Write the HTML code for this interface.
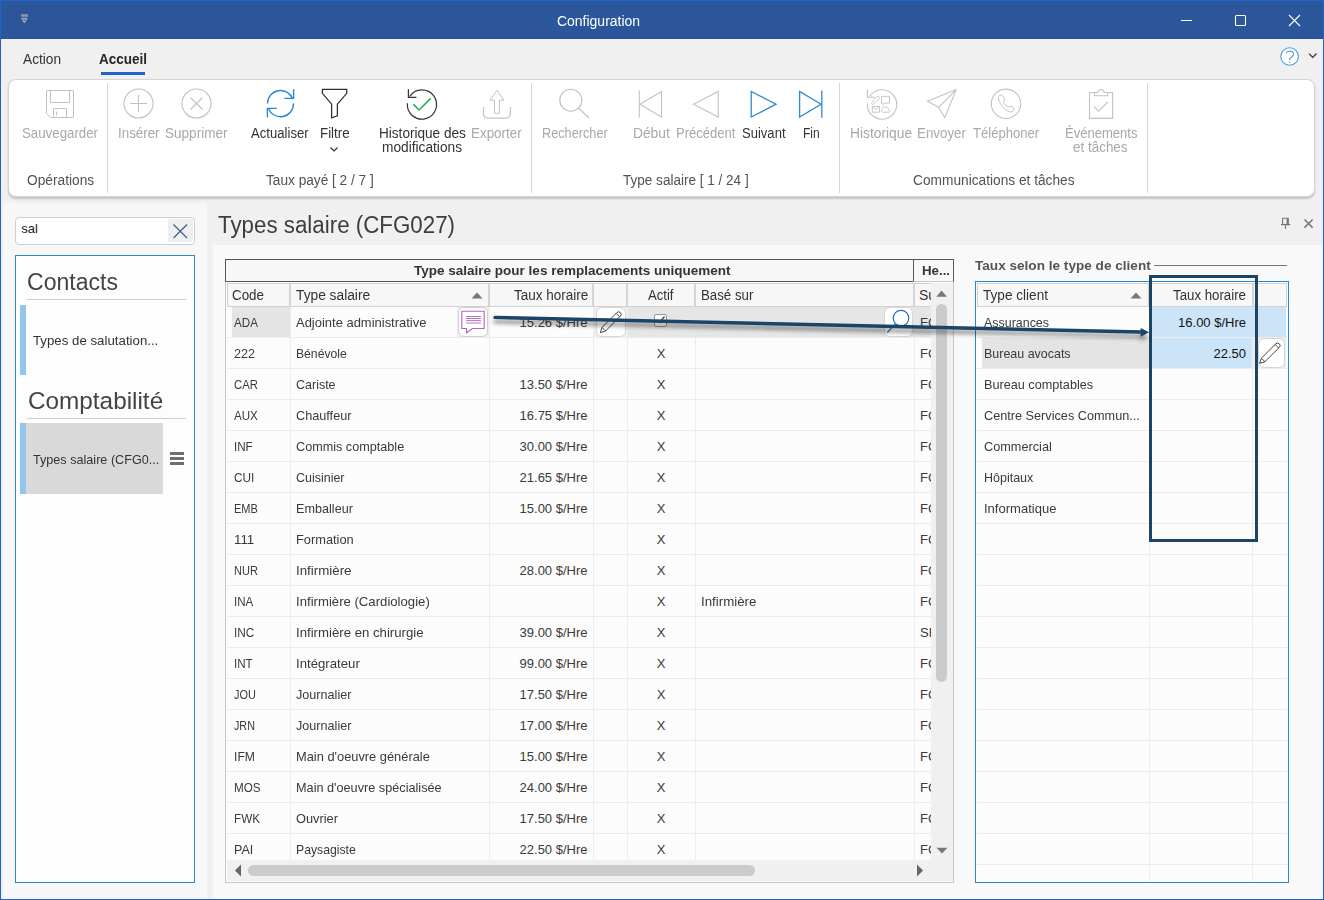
<!DOCTYPE html><html><head><meta charset="utf-8"><style>
html,body{margin:0;padding:0;}
body{width:1324px;height:900px;position:relative;overflow:hidden;background:#f0f0f0;font-family:"Liberation Sans", sans-serif;}
.t{position:absolute;white-space:nowrap;line-height:1;}
svg{overflow:visible}
</style></head><body>
<div style="position:absolute;left:0px;top:0px;width:1324px;height:39px;background:#2b579a"></div>
<div style="position:absolute;left:0px;top:0px;width:1324px;height:1px;background:#1f66d1"></div>
<svg style="position:absolute;left:18px;top:10px;" width="14" height="16" viewBox="18 10 14 16" fill="none"><rect x="21.1" y="14.2" width="6.8" height="2.6" fill="#8f97a6"/><path d="M21.6 18.3 L27.2 18.3 L24.4 23 Z" fill="#7f858f" stroke="#b8bcc4" stroke-width="0.8"/></svg>
<div class="t" style="left:557.40px;top:14px;font-size:14px;height:14px;color:#ffffff;font-weight:400;transform:scaleX(0.9976);transform-origin:0 0;">Configuration</div>
<svg style="position:absolute;left:1175px;top:10px;" width="140" height="24" viewBox="1175 10 140 24" fill="none"><path d="M1181 20.5 H1192" stroke="#fff" stroke-width="1"/><rect x="1235.5" y="15.5" width="10" height="10" rx="1" stroke="#fff" stroke-width="1.1"/><path d="M1289 15 L1300 26 M1300 15 L1289 26" stroke="#fff" stroke-width="1.1"/></svg>
<div class="t" style="left:23.40px;top:52px;font-size:14px;height:14px;color:#333;font-weight:400;transform:scaleX(0.9789);transform-origin:0 0;">Action</div>
<div class="t" style="left:99.00px;top:52px;font-size:14px;height:14px;color:#262626;font-weight:700;transform:scaleX(0.9644);transform-origin:0 0;">Accueil</div>
<div style="position:absolute;left:101px;top:72px;width:44px;height:3px;background:#1e63c8"></div>
<svg style="position:absolute;left:1278px;top:44px;" width="45" height="24" viewBox="1278 44 45 24" fill="none"><circle cx="1289.6" cy="56.5" r="8.8" fill="#fff" stroke="#4a9ed8" stroke-width="1.1"/><path d="M1286.4 52.8 C1287.5 51 1290.5 50.6 1292.4 51.8 C1294.3 53.2 1293.8 55.6 1291.8 56.7 C1290.2 57.6 1289.6 58.3 1289.6 59.8" stroke="#4a9ed8" stroke-width="1.1" stroke-linecap="round"/><circle cx="1289.6" cy="62.2" r="0.7" fill="#4a9ed8"/><path d="M1309 53.7 L1312.8 57.3 L1316.6 53.5" stroke="#444" stroke-width="1.3"/></svg>
<div style="position:absolute;left:8px;top:79px;width:1307px;height:118px;background:#fff;border:1px solid #d4d4d4;border-radius:8px;box-sizing:border-box;box-shadow:0 1.5px 2px rgba(0,0,0,0.18)"></div>
<div style="position:absolute;left:107px;top:83px;width:1px;height:110px;background:#d6d6d6"></div>
<div style="position:absolute;left:531px;top:83px;width:1px;height:110px;background:#d6d6d6"></div>
<div style="position:absolute;left:839px;top:83px;width:1px;height:110px;background:#d6d6d6"></div>
<div style="position:absolute;left:1147px;top:83px;width:1px;height:110px;background:#d6d6d6"></div>
<div class="t" style="left:22.00px;top:126px;font-size:14px;height:14px;color:#a8a8a8;font-weight:400;transform:scaleX(0.9482);transform-origin:0 0;">Sauvegarder</div>
<div class="t" style="left:118.00px;top:126px;font-size:14px;height:14px;color:#a8a8a8;font-weight:400;transform:scaleX(0.9531);transform-origin:0 0;">Insérer</div>
<div class="t" style="left:165.00px;top:126px;font-size:14px;height:14px;color:#a8a8a8;font-weight:400;transform:scaleX(0.9673);transform-origin:0 0;">Supprimer</div>
<div class="t" style="left:251.30px;top:126px;font-size:14px;height:14px;color:#333;font-weight:400;transform:scaleX(0.9388);transform-origin:0 0;">Actualiser</div>
<div class="t" style="left:320.40px;top:126px;font-size:14px;height:14px;color:#333;font-weight:400;transform:scaleX(0.9524);transform-origin:0 0;">Filtre</div>
<div class="t" style="left:378.70px;top:126px;font-size:14px;height:14px;color:#333;font-weight:400;transform:scaleX(0.9703);transform-origin:0 0;">Historique des</div>
<div class="t" style="left:381.60px;top:140px;font-size:14px;height:14px;color:#333;font-weight:400;transform:scaleX(0.9793);transform-origin:0 0;">modifications</div>
<div class="t" style="left:471.00px;top:126px;font-size:14px;height:14px;color:#a8a8a8;font-weight:400;transform:scaleX(0.9580);transform-origin:0 0;">Exporter</div>
<div class="t" style="left:541.60px;top:126px;font-size:14px;height:14px;color:#a8a8a8;font-weight:400;transform:scaleX(0.9077);transform-origin:0 0;">Rechercher</div>
<div class="t" style="left:632.70px;top:126px;font-size:14px;height:14px;color:#a8a8a8;font-weight:400;transform:scaleX(0.9845);transform-origin:0 0;">Début</div>
<div class="t" style="left:675.50px;top:126px;font-size:14px;height:14px;color:#a8a8a8;font-weight:400;transform:scaleX(0.9320);transform-origin:0 0;">Précédent</div>
<div class="t" style="left:741.50px;top:126px;font-size:14px;height:14px;color:#333;font-weight:400;transform:scaleX(0.9317);transform-origin:0 0;">Suivant</div>
<div class="t" style="left:802.60px;top:126px;font-size:14px;height:14px;color:#333;font-weight:400;transform:scaleX(0.8582);transform-origin:0 0;">Fin</div>
<div class="t" style="left:849.70px;top:126px;font-size:14px;height:14px;color:#a8a8a8;font-weight:400;transform:scaleX(0.9857);transform-origin:0 0;">Historique</div>
<div class="t" style="left:917.00px;top:126px;font-size:14px;height:14px;color:#a8a8a8;font-weight:400;transform:scaleX(0.9537);transform-origin:0 0;">Envoyer</div>
<div class="t" style="left:972.50px;top:126px;font-size:14px;height:14px;color:#a8a8a8;font-weight:400;transform:scaleX(0.9345);transform-origin:0 0;">Téléphoner</div>
<div class="t" style="left:1064.80px;top:126px;font-size:14px;height:14px;color:#a8a8a8;font-weight:400;transform:scaleX(0.9314);transform-origin:0 0;">Événements</div>
<div class="t" style="left:1073.00px;top:140px;font-size:14px;height:14px;color:#a8a8a8;font-weight:400;transform:scaleX(0.9606);transform-origin:0 0;">et tâches</div>
<div class="t" style="left:26.50px;top:173px;font-size:14px;height:14px;color:#525252;font-weight:400;transform:scaleX(0.9816);transform-origin:0 0;">Opérations</div>
<div class="t" style="left:265.90px;top:173px;font-size:14px;height:14px;color:#525252;font-weight:400;transform:scaleX(0.9753);transform-origin:0 0;">Taux payé [ 2 / 7 ]</div>
<div class="t" style="left:622.50px;top:173px;font-size:14px;height:14px;color:#525252;font-weight:400;transform:scaleX(0.9670);transform-origin:0 0;">Type salaire [ 1 / 24 ]</div>
<div class="t" style="left:912.80px;top:173px;font-size:14px;height:14px;color:#525252;font-weight:400;transform:scaleX(0.9795);transform-origin:0 0;">Communications et tâches</div>
<svg style="position:absolute;left:328px;top:145px;" width="12" height="10" viewBox="328 145 12 10" fill="none"><path d="M330.5 147.5 L334 151 L337.5 147.5" stroke="#333" stroke-width="1.2"/></svg>
<svg style="position:absolute;left:40px;top:84px;" width="40" height="40" viewBox="40 84 40 40" fill="none"><path d="M46.5 90.5 H73.5 V117.5 H50.5 L46.5 113.5 Z" stroke="#c2c2c2" stroke-width="1"/><path d="M50.5 90.5 V102.5 H69.5 V90.5" stroke="#c2c2c2"/><path d="M53.5 117.5 V108.5 H66.5 V117.5" stroke="#c2c2c2"/><path d="M56.5 111.5 V115.5" stroke="#c2c2c2"/></svg>
<svg style="position:absolute;left:120px;top:85px;" width="40" height="38" viewBox="120 85 40 38" fill="none"><circle cx="138.5" cy="103.5" r="14.5" stroke="#c2c2c2" stroke-width="1.1"/><path d="M138.5 95 V112 M130 103.5 H147" stroke="#c2c2c2" stroke-width="1.1"/></svg>
<svg style="position:absolute;left:178px;top:85px;" width="40" height="38" viewBox="178 85 40 38" fill="none"><circle cx="196.5" cy="103.5" r="14.5" stroke="#c2c2c2" stroke-width="1.1"/><path d="M190.5 97.5 L202.5 109.5 M202.5 97.5 L190.5 109.5" stroke="#c2c2c2" stroke-width="1.1"/></svg>
<svg style="position:absolute;left:260px;top:84px;" width="40" height="40" viewBox="260 84 40 40" fill="none"><path d="M267.5 103.5 A13 13 0 0 1 292.7 99" stroke="#2e88d4" stroke-width="1.4"/><path d="M293.6 89.2 V98.4 H284.3" stroke="#2e88d4" stroke-width="1.4"/><path d="M293.5 103.5 A13 13 0 0 1 268.3 108.2" stroke="#2e88d4" stroke-width="1.4"/><path d="M267.4 117.6 V108.4 H276.8" stroke="#2e88d4" stroke-width="1.4"/></svg>
<svg style="position:absolute;left:316px;top:84px;" width="40" height="40" viewBox="316 84 40 40" fill="none"><path d="M322.4 89.4 H346.7 V93.3 L337.4 104.2 V115.8 L331.6 117.8 V104.2 L322.4 93.3 Z" stroke="#333" stroke-width="1.3" stroke-linejoin="miter"/></svg>
<svg style="position:absolute;left:402px;top:84px;" width="40" height="40" viewBox="402 84 40 40" fill="none"><path d="M407.4 103.2 A14.6 14.6 0 1 0 409.8 96.4" stroke="#333" stroke-width="1.2"/><path d="M408.4 89.3 V97.3 H416.5" stroke="#333" stroke-width="1.2"/><path d="M413.5 104.4 L419.1 110 L430.7 98.4" stroke="#22b04b" stroke-width="1.5"/></svg>
<svg style="position:absolute;left:477px;top:84px;" width="40" height="40" viewBox="477 84 40 40" fill="none"><path d="M483.5 107 V113.5 A4.6 4.6 0 0 0 488.1 118.2 H505.8 A4.6 4.6 0 0 0 510.4 113.5 V107" stroke="#c2c2c2" stroke-width="1.2"/><path d="M497 90.2 L503.9 100.2 H499.4 V113.3 H494.5 V100.2 H489.9 Z" stroke="#c2c2c2" stroke-width="1"/></svg>
<svg style="position:absolute;left:555px;top:85px;" width="40" height="40" viewBox="555 85 40 40" fill="none"><circle cx="570.8" cy="100.2" r="11" stroke="#c2c2c2" stroke-width="1.1"/><path d="M578.6 108 L589 118" stroke="#c2c2c2" stroke-width="1.2"/></svg>
<svg style="position:absolute;left:635px;top:85px;" width="30" height="40" viewBox="635 85 30 40" fill="none"><path d="M639.3 90.5 V117.8" stroke="#c2c2c2" stroke-width="1.1"/><path d="M661.5 91.5 V117 L640 104.2 Z" stroke="#c2c2c2" stroke-width="1.1"/></svg>
<svg style="position:absolute;left:690px;top:85px;" width="30" height="40" viewBox="690 85 30 40" fill="none"><path d="M718.3 91.5 V117 L693.5 104.2 Z" stroke="#c2c2c2" stroke-width="1.1"/></svg>
<svg style="position:absolute;left:748px;top:85px;" width="30" height="40" viewBox="748 85 30 40" fill="none"><path d="M751.2 91.5 V117 L776 104.2 Z" stroke="#2e88d4" stroke-width="1.3"/></svg>
<svg style="position:absolute;left:796px;top:85px;" width="30" height="40" viewBox="796 85 30 40" fill="none"><path d="M799.6 91.5 V117 L821 104.2 Z" stroke="#2e88d4" stroke-width="1.3"/><path d="M821.8 90.5 V117.8" stroke="#2e88d4" stroke-width="1.3"/></svg>
<svg style="position:absolute;left:860px;top:84px;" width="40" height="40" viewBox="860 84 40 40" fill="none"><path d="M867.4 103.2 A14.7 14.7 0 1 0 869.6 96.6" stroke="#c2c2c2" stroke-width="1.1"/><path d="M867.4 89.5 V97.3 H875.4" stroke="#c2c2c2" stroke-width="1.1"/><path d="M878.2 96.2 C879.6 96.6 879.8 98.2 878.6 99 L877.8 99.5 C876.8 101.2 875.6 102.4 874 103.2 L873.4 104.2 C872.5 104.9 871.2 104.3 871.7 103.2 C872.6 101 875 98 877.2 96.6 Z" stroke="#c2c2c2" stroke-width="0.9"/><path d="M881.5 96.4 H889.5 V103.1 H884.6 L883.6 104.6 L882.8 103.1 H881.5 Z" stroke="#c2c2c2" stroke-width="0.9"/><path d="M872.4 106.5 H879.5 V112.2 H872.4 Z M873 107.2 L875.9 109.6 L878.8 107.2" stroke="#c2c2c2" stroke-width="0.9"/><path d="M882.3 112.2 H888.6 C890 112.2 890.2 109.7 888.6 109.4 C888.5 107.5 886.6 106.3 885 107.3 C884.3 106.2 882.4 106.6 882.6 108.6 C881 109 881 112.2 882.3 112.2 Z" stroke="#c2c2c2" stroke-width="0.9"/></svg>
<svg style="position:absolute;left:922px;top:84px;" width="40" height="40" viewBox="922 84 40 40" fill="none"><path d="M927.3 101.3 L956.2 89.6 L944.7 117.8 L938.7 107.3 Z M938.7 107.3 L956.2 89.6" stroke="#c2c2c2" stroke-width="1.1" stroke-linejoin="round"/></svg>
<svg style="position:absolute;left:986px;top:84px;" width="40" height="40" viewBox="986 84 40 40" fill="none"><circle cx="1006" cy="103.8" r="14.7" stroke="#c2c2c2" stroke-width="1.1"/><path d="M999.5 95.5 C1001.5 94.5 1002.5 95 1003.5 97 L1004.5 99.5 C1004.5 100.5 1003.5 101.2 1003.5 102.2 C1004.5 104.5 1006.5 106.3 1008.5 107 C1009.5 107 1010.3 106 1011.2 106.2 L1013.7 108 C1014.5 108.8 1014 110.5 1012 111.8 C1010 112.5 1008 111.5 1005.5 109.5 C1003 107.2 1000.5 104.2 999 101 C998 98.5 998 96.5 999.5 95.5 Z" stroke="#c2c2c2" stroke-width="1"/></svg>
<svg style="position:absolute;left:1081px;top:84px;" width="40" height="40" viewBox="1081 84 40 40" fill="none"><path d="M1089.5 92.5 H1098 A3 3 0 0 1 1104 92.5 H1112.6 V118.4 H1089.5 Z" stroke="#c2c2c2" stroke-width="1.1"/><path d="M1094.5 92.5 V95.7 H1107.6 V92.5" stroke="#c2c2c2" stroke-width="1.1"/><path d="M1094.1 106.4 L1098.5 111.3 L1107.7 102" stroke="#c2c2c2" stroke-width="1.1"/></svg>
<div style="position:absolute;left:3px;top:203px;width:204px;height:696px;background:#f7f7f7"></div>
<div style="position:absolute;left:207px;top:203px;width:5px;height:696px;background:#efefef"></div>
<div style="position:absolute;left:15px;top:217px;width:180px;height:28px;background:#fff;border:1px solid #cfcfcf;border-radius:4px;box-sizing:border-box"></div>
<div style="position:absolute;left:168px;top:219px;width:25px;height:23px;background:#efefef;border-radius:2px"></div>
<svg style="position:absolute;left:170px;top:220px;" width="22" height="22" viewBox="170 220 22 22" fill="none"><path d="M173.5 224.5 L187 238 M187 224.5 L173.5 238" stroke="#3d5f8f" stroke-width="1.2"/></svg>
<div class="t" style="left:21.3px;top:222px;font-size:13px;height:13px;color:#222;font-weight:400;">sal</div>
<div style="position:absolute;left:15px;top:255px;width:180px;height:628px;background:#fdfdfd;border:1px solid #2a86cf;box-sizing:border-box"></div>
<div class="t" style="left:27.40px;top:271px;font-size:23.5px;height:23.5px;color:#444;font-weight:400;transform:scaleX(0.9805);transform-origin:0 0;">Contacts</div>
<div style="position:absolute;left:27px;top:299px;width:159px;height:1px;background:#cfcfcf"></div>
<div style="position:absolute;left:20px;top:305px;width:6px;height:70px;background:#92c6ee"></div>
<div class="t" style="left:32.70px;top:334px;font-size:13.5px;height:13.5px;color:#333;font-weight:400;transform:scaleX(0.9822);transform-origin:0 0;">Types de salutation...</div>
<div class="t" style="left:27.80px;top:389px;font-size:24.5px;height:24.5px;color:#444;font-weight:400;transform:scaleX(0.9925);transform-origin:0 0;">Comptabilité</div>
<div style="position:absolute;left:27px;top:418px;width:159px;height:1px;background:#cfcfcf"></div>
<div style="position:absolute;left:20px;top:423px;width:6px;height:71px;background:#92c6ee"></div>
<div style="position:absolute;left:26px;top:423px;width:137px;height:71px;background:#d9d9d9"></div>
<div class="t" style="left:32.70px;top:453px;font-size:13.5px;height:13.5px;color:#333;font-weight:400;transform:scaleX(0.9351);transform-origin:0 0;">Types salaire (CFG0...</div>
<div style="position:absolute;left:170px;top:452px;width:14px;height:3px;background:#6e6e6e"></div>
<div style="position:absolute;left:170px;top:457px;width:14px;height:3px;background:#6e6e6e"></div>
<div style="position:absolute;left:170px;top:461.5px;width:14px;height:3px;background:#6e6e6e"></div>
<div style="position:absolute;left:212px;top:203px;width:1110px;height:42px;background:#f0f0f0"></div>
<div class="t" style="left:218.00px;top:214px;font-size:23.5px;height:23.5px;color:#3d3d3d;font-weight:400;transform:scaleX(0.9501);transform-origin:0 0;">Types salaire (CFG027)</div>
<svg style="position:absolute;left:1278px;top:214px;" width="20" height="20" viewBox="1278 214 20 20" fill="none"><path d="M1282.6 224 V218.3 H1288.2 V224" stroke="#777" stroke-width="1.1"/><rect x="1286.6" y="218.3" width="2" height="5.7" fill="#777"/><path d="M1281 224.6 H1290.3" stroke="#777" stroke-width="1.3"/><path d="M1285.5 225 V229" stroke="#777" stroke-width="1.1"/></svg>
<svg style="position:absolute;left:1300px;top:214px;" width="20" height="20" viewBox="1300 214 20 20" fill="none"><path d="M1304.5 219.5 L1312.6 227.6 M1312.6 219.5 L1304.5 227.6" stroke="#777" stroke-width="1.5"/></svg>
<div style="position:absolute;left:213px;top:245px;width:1109px;height:654px;background:#f9f9f9"></div>
<div style="position:absolute;left:225px;top:281px;width:729px;height:602px;background:#fcfcfc;border:1px solid #c8c8c8;border-top:none;box-sizing:border-box"></div>
<div style="position:absolute;left:225px;top:259px;width:689px;height:23px;border:1px solid #555;box-sizing:border-box;background:#f7f7f7"></div>
<div style="position:absolute;left:913px;top:259px;width:41px;height:23px;border:1px solid #585858;border-bottom:1.5px solid #c8c8c8;box-sizing:border-box;background:#f7f7f7"></div>
<div class="t" style="left:414.00px;top:264px;font-size:13.5px;height:13.5px;color:#333;font-weight:700;transform:scaleX(1.0007);transform-origin:0 0;">Type salaire pour les remplacements uniquement</div>
<div class="t" style="left:922.40px;top:264px;font-size:13.5px;height:13.5px;color:#333;font-weight:700;transform:scaleX(0.9830);transform-origin:0 0;">He...</div>
<div style="position:absolute;left:227px;top:283px;width:704px;height:24px;background:#f7f7f7;border-top:1px solid #d2d2d2;border-bottom:1px solid #d2d2d2;box-sizing:border-box"></div>
<div style="position:absolute;left:227px;top:283px;width:1px;height:24px;background:#d2d2d2"></div>
<div style="position:absolute;left:289px;top:283px;width:2px;height:24px;background:#d4d4d4"></div>
<div style="position:absolute;left:488px;top:283px;width:2px;height:24px;background:#d4d4d4"></div>
<div style="position:absolute;left:592px;top:283px;width:2px;height:24px;background:#d4d4d4"></div>
<div style="position:absolute;left:626px;top:283px;width:2px;height:24px;background:#d4d4d4"></div>
<div style="position:absolute;left:694px;top:283px;width:2px;height:24px;background:#d4d4d4"></div>
<div style="position:absolute;left:913px;top:283px;width:2px;height:24px;background:#d4d4d4"></div>
<div class="t" style="left:232.30px;top:288px;font-size:14px;height:14px;color:#333;font-weight:400;transform:scaleX(0.9564);transform-origin:0 0;">Code</div>
<div class="t" style="left:296.30px;top:288px;font-size:14px;height:14px;color:#333;font-weight:400;transform:scaleX(0.9820);transform-origin:0 0;">Type salaire</div>
<svg style="position:absolute;left:470px;top:288px;" width="14" height="12" viewBox="470 288 14 12" fill="none"><path d="M471.5 298.5 L477 292.5 L482.5 298.5 Z" fill="#777"/></svg>
<div class="t" style="left:513.80px;top:288px;font-size:14px;height:14px;color:#333;font-weight:400;transform:scaleX(0.9628);transform-origin:0 0;">Taux horaire</div>
<div class="t" style="left:648.20px;top:288px;font-size:14px;height:14px;color:#333;font-weight:400;transform:scaleX(0.9365);transform-origin:0 0;">Actif</div>
<div class="t" style="left:700.60px;top:288px;font-size:14px;height:14px;color:#333;font-weight:400;transform:scaleX(0.9469);transform-origin:0 0;">Basé sur</div>
<div class="t" style="left:919px;top:288px;font-size:14px;height:14px;color:#333;font-weight:400;width:12px;overflow:hidden">Su</div>
<div style="position:absolute;left:290px;top:307px;width:1px;height:553px;background:#ececec"></div>
<div style="position:absolute;left:489px;top:307px;width:1px;height:553px;background:#ececec"></div>
<div style="position:absolute;left:593px;top:307px;width:1px;height:553px;background:#ececec"></div>
<div style="position:absolute;left:627px;top:307px;width:1px;height:553px;background:#ececec"></div>
<div style="position:absolute;left:695px;top:307px;width:1px;height:553px;background:#ececec"></div>
<div style="position:absolute;left:914px;top:307px;width:1px;height:553px;background:#ececec"></div>
<div style="position:absolute;left:232px;top:307px;width:58px;height:30px;background:#e4e4e4"></div>
<div style="position:absolute;left:628px;top:307px;width:303px;height:30px;background:#e6e6e6"></div>
<div style="position:absolute;left:227px;top:337px;width:704px;height:1px;background:#ececec"></div>
<div class="t" style="left:234.20px;top:316px;font-size:13px;height:13px;color:#3a3a3a;font-weight:400;transform:scaleX(0.8962);transform-origin:0 0;">ADA</div>
<div class="t" style="left:296.20px;top:316px;font-size:13px;height:13px;color:#3a3a3a;font-weight:400;transform:scaleX(0.9971);transform-origin:0 0;">Adjointe administrative</div>
<div class="t" style="right:736.5px;top:316px;font-size:13px;height:13px;color:#3a3a3a;font-weight:400;">15.26 $/Hre</div>
<div class="t" style="left:920px;top:316px;font-size:13px;height:13px;color:#3a3a3a;font-weight:400;width:11px;overflow:hidden">FC</div>
<div style="position:absolute;left:227px;top:368px;width:704px;height:1px;background:#ececec"></div>
<div class="t" style="left:234.20px;top:347px;font-size:13px;height:13px;color:#3a3a3a;font-weight:400;transform:scaleX(0.9627);transform-origin:0 0;">222</div>
<div class="t" style="left:296.20px;top:347px;font-size:13px;height:13px;color:#3a3a3a;font-weight:400;transform:scaleX(0.9353);transform-origin:0 0;">Bénévole</div>
<div class="t" style="left:361px;width:600px;text-align:center;top:347px;font-size:13px;height:13px;color:#3a3a3a;font-weight:400;">X</div>
<div class="t" style="left:920px;top:347px;font-size:13px;height:13px;color:#3a3a3a;font-weight:400;width:11px;overflow:hidden">FC</div>
<div style="position:absolute;left:227px;top:399px;width:704px;height:1px;background:#ececec"></div>
<div class="t" style="left:234.20px;top:378px;font-size:13px;height:13px;color:#3a3a3a;font-weight:400;transform:scaleX(0.8677);transform-origin:0 0;">CAR</div>
<div class="t" style="left:296.20px;top:378px;font-size:13px;height:13px;color:#3a3a3a;font-weight:400;transform:scaleX(0.9609);transform-origin:0 0;">Cariste</div>
<div class="t" style="right:736.5px;top:378px;font-size:13px;height:13px;color:#3a3a3a;font-weight:400;">13.50 $/Hre</div>
<div class="t" style="left:361px;width:600px;text-align:center;top:378px;font-size:13px;height:13px;color:#3a3a3a;font-weight:400;">X</div>
<div class="t" style="left:920px;top:378px;font-size:13px;height:13px;color:#3a3a3a;font-weight:400;width:11px;overflow:hidden">FC</div>
<div style="position:absolute;left:227px;top:430px;width:704px;height:1px;background:#ececec"></div>
<div class="t" style="left:234.20px;top:409px;font-size:13px;height:13px;color:#3a3a3a;font-weight:400;transform:scaleX(0.8909);transform-origin:0 0;">AUX</div>
<div class="t" style="left:296.20px;top:409px;font-size:13px;height:13px;color:#3a3a3a;font-weight:400;transform:scaleX(0.9758);transform-origin:0 0;">Chauffeur</div>
<div class="t" style="right:736.5px;top:409px;font-size:13px;height:13px;color:#3a3a3a;font-weight:400;">16.75 $/Hre</div>
<div class="t" style="left:361px;width:600px;text-align:center;top:409px;font-size:13px;height:13px;color:#3a3a3a;font-weight:400;">X</div>
<div class="t" style="left:920px;top:409px;font-size:13px;height:13px;color:#3a3a3a;font-weight:400;width:11px;overflow:hidden">FC</div>
<div style="position:absolute;left:227px;top:461px;width:704px;height:1px;background:#ececec"></div>
<div class="t" style="left:234.20px;top:440px;font-size:13px;height:13px;color:#3a3a3a;font-weight:400;transform:scaleX(0.8935);transform-origin:0 0;">INF</div>
<div class="t" style="left:296.20px;top:440px;font-size:13px;height:13px;color:#3a3a3a;font-weight:400;transform:scaleX(0.9723);transform-origin:0 0;">Commis comptable</div>
<div class="t" style="right:736.5px;top:440px;font-size:13px;height:13px;color:#3a3a3a;font-weight:400;">30.00 $/Hre</div>
<div class="t" style="left:361px;width:600px;text-align:center;top:440px;font-size:13px;height:13px;color:#3a3a3a;font-weight:400;">X</div>
<div class="t" style="left:920px;top:440px;font-size:13px;height:13px;color:#3a3a3a;font-weight:400;width:11px;overflow:hidden">FC</div>
<div style="position:absolute;left:227px;top:492px;width:704px;height:1px;background:#ececec"></div>
<div class="t" style="left:234.20px;top:471px;font-size:13px;height:13px;color:#3a3a3a;font-weight:400;transform:scaleX(0.9079);transform-origin:0 0;">CUI</div>
<div class="t" style="left:296.20px;top:471px;font-size:13px;height:13px;color:#3a3a3a;font-weight:400;transform:scaleX(0.9591);transform-origin:0 0;">Cuisinier</div>
<div class="t" style="right:736.5px;top:471px;font-size:13px;height:13px;color:#3a3a3a;font-weight:400;">21.65 $/Hre</div>
<div class="t" style="left:361px;width:600px;text-align:center;top:471px;font-size:13px;height:13px;color:#3a3a3a;font-weight:400;">X</div>
<div class="t" style="left:920px;top:471px;font-size:13px;height:13px;color:#3a3a3a;font-weight:400;width:11px;overflow:hidden">FC</div>
<div style="position:absolute;left:227px;top:523px;width:704px;height:1px;background:#ececec"></div>
<div class="t" style="left:234.20px;top:502px;font-size:13px;height:13px;color:#3a3a3a;font-weight:400;transform:scaleX(0.8456);transform-origin:0 0;">EMB</div>
<div class="t" style="left:296.20px;top:502px;font-size:13px;height:13px;color:#3a3a3a;font-weight:400;transform:scaleX(0.9726);transform-origin:0 0;">Emballeur</div>
<div class="t" style="right:736.5px;top:502px;font-size:13px;height:13px;color:#3a3a3a;font-weight:400;">15.00 $/Hre</div>
<div class="t" style="left:361px;width:600px;text-align:center;top:502px;font-size:13px;height:13px;color:#3a3a3a;font-weight:400;">X</div>
<div class="t" style="left:920px;top:502px;font-size:13px;height:13px;color:#3a3a3a;font-weight:400;width:11px;overflow:hidden">FC</div>
<div style="position:absolute;left:227px;top:554px;width:704px;height:1px;background:#ececec"></div>
<div class="t" style="left:234.20px;top:533px;font-size:13px;height:13px;color:#3a3a3a;font-weight:400;transform:scaleX(1.0273);transform-origin:0 0;">111</div>
<div class="t" style="left:296.20px;top:533px;font-size:13px;height:13px;color:#3a3a3a;font-weight:400;transform:scaleX(0.9863);transform-origin:0 0;">Formation</div>
<div class="t" style="left:361px;width:600px;text-align:center;top:533px;font-size:13px;height:13px;color:#3a3a3a;font-weight:400;">X</div>
<div class="t" style="left:920px;top:533px;font-size:13px;height:13px;color:#3a3a3a;font-weight:400;width:11px;overflow:hidden">FC</div>
<div style="position:absolute;left:227px;top:585px;width:704px;height:1px;background:#ececec"></div>
<div class="t" style="left:234.20px;top:564px;font-size:13px;height:13px;color:#3a3a3a;font-weight:400;transform:scaleX(0.8456);transform-origin:0 0;">NUR</div>
<div class="t" style="left:296.20px;top:564px;font-size:13px;height:13px;color:#3a3a3a;font-weight:400;transform:scaleX(1.0238);transform-origin:0 0;">Infirmière</div>
<div class="t" style="right:736.5px;top:564px;font-size:13px;height:13px;color:#3a3a3a;font-weight:400;">28.00 $/Hre</div>
<div class="t" style="left:361px;width:600px;text-align:center;top:564px;font-size:13px;height:13px;color:#3a3a3a;font-weight:400;">X</div>
<div class="t" style="left:920px;top:564px;font-size:13px;height:13px;color:#3a3a3a;font-weight:400;width:11px;overflow:hidden">FC</div>
<div style="position:absolute;left:227px;top:616px;width:704px;height:1px;background:#ececec"></div>
<div class="t" style="left:234.20px;top:595px;font-size:13px;height:13px;color:#3a3a3a;font-weight:400;transform:scaleX(0.8890);transform-origin:0 0;">INA</div>
<div class="t" style="left:296.20px;top:595px;font-size:13px;height:13px;color:#3a3a3a;font-weight:400;transform:scaleX(1.0120);transform-origin:0 0;">Infirmière (Cardiologie)</div>
<div class="t" style="left:361px;width:600px;text-align:center;top:595px;font-size:13px;height:13px;color:#3a3a3a;font-weight:400;">X</div>
<div class="t" style="left:701.10px;top:595px;font-size:13px;height:13px;color:#3a3a3a;font-weight:400;transform:scaleX(1.0220);transform-origin:0 0;">Infirmière</div>
<div class="t" style="left:920px;top:595px;font-size:13px;height:13px;color:#3a3a3a;font-weight:400;width:11px;overflow:hidden">FC</div>
<div style="position:absolute;left:227px;top:647px;width:704px;height:1px;background:#ececec"></div>
<div class="t" style="left:234.20px;top:626px;font-size:13px;height:13px;color:#3a3a3a;font-weight:400;transform:scaleX(0.9079);transform-origin:0 0;">INC</div>
<div class="t" style="left:296.20px;top:626px;font-size:13px;height:13px;color:#3a3a3a;font-weight:400;transform:scaleX(1.0150);transform-origin:0 0;">Infirmière en chirurgie</div>
<div class="t" style="right:736.5px;top:626px;font-size:13px;height:13px;color:#3a3a3a;font-weight:400;">39.00 $/Hre</div>
<div class="t" style="left:361px;width:600px;text-align:center;top:626px;font-size:13px;height:13px;color:#3a3a3a;font-weight:400;">X</div>
<div class="t" style="left:920px;top:626px;font-size:13px;height:13px;color:#3a3a3a;font-weight:400;width:11px;overflow:hidden">SF</div>
<div style="position:absolute;left:227px;top:678px;width:704px;height:1px;background:#ececec"></div>
<div class="t" style="left:234.20px;top:657px;font-size:13px;height:13px;color:#3a3a3a;font-weight:400;transform:scaleX(0.8935);transform-origin:0 0;">INT</div>
<div class="t" style="left:296.20px;top:657px;font-size:13px;height:13px;color:#3a3a3a;font-weight:400;transform:scaleX(1.0150);transform-origin:0 0;">Intégrateur</div>
<div class="t" style="right:736.5px;top:657px;font-size:13px;height:13px;color:#3a3a3a;font-weight:400;">99.00 $/Hre</div>
<div class="t" style="left:361px;width:600px;text-align:center;top:657px;font-size:13px;height:13px;color:#3a3a3a;font-weight:400;">X</div>
<div class="t" style="left:920px;top:657px;font-size:13px;height:13px;color:#3a3a3a;font-weight:400;width:11px;overflow:hidden">FC</div>
<div style="position:absolute;left:227px;top:709px;width:704px;height:1px;background:#ececec"></div>
<div class="t" style="left:234.20px;top:688px;font-size:13px;height:13px;color:#3a3a3a;font-weight:400;transform:scaleX(0.8385);transform-origin:0 0;">JOU</div>
<div class="t" style="left:296.20px;top:688px;font-size:13px;height:13px;color:#3a3a3a;font-weight:400;transform:scaleX(0.9707);transform-origin:0 0;">Journalier</div>
<div class="t" style="right:736.5px;top:688px;font-size:13px;height:13px;color:#3a3a3a;font-weight:400;">17.50 $/Hre</div>
<div class="t" style="left:361px;width:600px;text-align:center;top:688px;font-size:13px;height:13px;color:#3a3a3a;font-weight:400;">X</div>
<div class="t" style="left:920px;top:688px;font-size:13px;height:13px;color:#3a3a3a;font-weight:400;width:11px;overflow:hidden">FC</div>
<div style="position:absolute;left:227px;top:740px;width:704px;height:1px;background:#ececec"></div>
<div class="t" style="left:234.20px;top:719px;font-size:13px;height:13px;color:#3a3a3a;font-weight:400;transform:scaleX(0.8266);transform-origin:0 0;">JRN</div>
<div class="t" style="left:296.20px;top:719px;font-size:13px;height:13px;color:#3a3a3a;font-weight:400;transform:scaleX(0.9707);transform-origin:0 0;">Journalier</div>
<div class="t" style="right:736.5px;top:719px;font-size:13px;height:13px;color:#3a3a3a;font-weight:400;">17.00 $/Hre</div>
<div class="t" style="left:361px;width:600px;text-align:center;top:719px;font-size:13px;height:13px;color:#3a3a3a;font-weight:400;">X</div>
<div class="t" style="left:920px;top:719px;font-size:13px;height:13px;color:#3a3a3a;font-weight:400;width:11px;overflow:hidden">FC</div>
<div style="position:absolute;left:227px;top:771px;width:704px;height:1px;background:#ececec"></div>
<div class="t" style="left:234.20px;top:750px;font-size:13px;height:13px;color:#3a3a3a;font-weight:400;transform:scaleX(0.9347);transform-origin:0 0;">IFM</div>
<div class="t" style="left:296.20px;top:750px;font-size:13px;height:13px;color:#3a3a3a;font-weight:400;transform:scaleX(0.9877);transform-origin:0 0;">Main d'oeuvre générale</div>
<div class="t" style="right:736.5px;top:750px;font-size:13px;height:13px;color:#3a3a3a;font-weight:400;">15.00 $/Hre</div>
<div class="t" style="left:361px;width:600px;text-align:center;top:750px;font-size:13px;height:13px;color:#3a3a3a;font-weight:400;">X</div>
<div class="t" style="left:920px;top:750px;font-size:13px;height:13px;color:#3a3a3a;font-weight:400;width:11px;overflow:hidden">FC</div>
<div style="position:absolute;left:227px;top:802px;width:704px;height:1px;background:#ececec"></div>
<div class="t" style="left:234.20px;top:781px;font-size:13px;height:13px;color:#3a3a3a;font-weight:400;transform:scaleX(0.8941);transform-origin:0 0;">MOS</div>
<div class="t" style="left:296.20px;top:781px;font-size:13px;height:13px;color:#3a3a3a;font-weight:400;transform:scaleX(0.9760);transform-origin:0 0;">Main d'oeuvre spécialisée</div>
<div class="t" style="right:736.5px;top:781px;font-size:13px;height:13px;color:#3a3a3a;font-weight:400;">24.00 $/Hre</div>
<div class="t" style="left:361px;width:600px;text-align:center;top:781px;font-size:13px;height:13px;color:#3a3a3a;font-weight:400;">X</div>
<div class="t" style="left:920px;top:781px;font-size:13px;height:13px;color:#3a3a3a;font-weight:400;width:11px;overflow:hidden">FC</div>
<div style="position:absolute;left:227px;top:833px;width:704px;height:1px;background:#ececec"></div>
<div class="t" style="left:234.20px;top:812px;font-size:13px;height:13px;color:#3a3a3a;font-weight:400;transform:scaleX(0.8974);transform-origin:0 0;">FWK</div>
<div class="t" style="left:296.20px;top:812px;font-size:13px;height:13px;color:#3a3a3a;font-weight:400;transform:scaleX(0.9850);transform-origin:0 0;">Ouvrier</div>
<div class="t" style="right:736.5px;top:812px;font-size:13px;height:13px;color:#3a3a3a;font-weight:400;">17.50 $/Hre</div>
<div class="t" style="left:361px;width:600px;text-align:center;top:812px;font-size:13px;height:13px;color:#3a3a3a;font-weight:400;">X</div>
<div class="t" style="left:920px;top:812px;font-size:13px;height:13px;color:#3a3a3a;font-weight:400;width:11px;overflow:hidden">FC</div>
<div class="t" style="left:234.20px;top:843px;font-size:13px;height:13px;color:#3a3a3a;font-weight:400;transform:scaleX(0.9640);transform-origin:0 0;">PAI</div>
<div class="t" style="left:296.20px;top:843px;font-size:13px;height:13px;color:#3a3a3a;font-weight:400;transform:scaleX(0.9407);transform-origin:0 0;">Paysagiste</div>
<div class="t" style="right:736.5px;top:843px;font-size:13px;height:13px;color:#3a3a3a;font-weight:400;">22.50 $/Hre</div>
<div class="t" style="left:361px;width:600px;text-align:center;top:843px;font-size:13px;height:13px;color:#3a3a3a;font-weight:400;">X</div>
<div class="t" style="left:920px;top:843px;font-size:13px;height:13px;color:#3a3a3a;font-weight:400;width:11px;overflow:hidden">FC</div>
<div style="position:absolute;left:457px;top:307px;width:32px;height:30px;background:#eeeeee"></div>
<div style="position:absolute;left:594px;top:307px;width:33px;height:30px;background:#eeeeee"></div>
<div style="position:absolute;left:458px;top:307px;width:30px;height:30px;background:#fff;border:1px solid #d0d0d0;border-radius:6px;box-sizing:border-box"></div>
<svg style="position:absolute;left:458px;top:307px;" width="30" height="30" viewBox="458 307 30 30" fill="none"><path d="M461.8 311.3 H484.2 V328.5 H472.4 L466.5 332.8 V328.5 H461.8 Z" stroke="#b463bf" stroke-width="1.1"/><path d="M466 316.5 H481 M466 318.5 H481 M466 320.6 H481 M466 323 H481" stroke="#b463bf" stroke-width="0.9"/></svg>
<div style="position:absolute;left:596px;top:307px;width:30px;height:30px;background:#fff;border:1px solid #d6d6d6;border-radius:6px;box-sizing:border-box"></div>
<svg style="position:absolute;left:596px;top:307px;" width="30" height="30" viewBox="596 307 30 30" fill="none"><path d="M600.30 332.70 L605.60 330.93 L620.37 316.17 A2.5 2.5 0 0 0 616.83 312.63 L602.07 327.40 Z M605.60 330.93 L602.07 327.40 M619.66 316.87 L616.13 313.34" stroke="#444" stroke-width="1" stroke-linejoin="round"/></svg>
<div style="position:absolute;left:654px;top:314px;width:13px;height:13px;background:#fafafa;border:1px solid #999;border-radius:2px;box-sizing:border-box"></div>
<svg style="position:absolute;left:654px;top:314px;" width="13" height="13" viewBox="654 314 13 13" fill="none"><path d="M657 320 L659.5 322.5 L664.5 316.5" stroke="#444" stroke-width="1.2"/></svg>
<div style="position:absolute;left:884px;top:307px;width:29px;height:30px;background:#fff;border:1px solid #d6d6d6;border-radius:6px;box-sizing:border-box"></div>
<svg style="position:absolute;left:884px;top:307px;" width="29" height="30" viewBox="884 307 29 30" fill="none"><circle cx="901" cy="318.1" r="7.8" stroke="#1a6fc8" stroke-width="1.2"/><path d="M895.5 323.6 L887.3 332.6" stroke="#1a6fc8" stroke-width="1.3"/></svg>
<div style="position:absolute;left:931px;top:283px;width:22px;height:577px;background:#f0f0f0"></div>
<svg style="position:absolute;left:931px;top:283px;" width="22" height="20" viewBox="931 283 22 20" fill="none"><path d="M936.3 296.8 L941.6 290.4 L946.9 296.8 Z" fill="#777"/></svg>
<div style="position:absolute;left:936px;top:304px;width:11px;height:378px;background:#cbcbcb;border-radius:5.5px"></div>
<svg style="position:absolute;left:931px;top:840px;" width="22" height="20" viewBox="931 840 22 20" fill="none"><path d="M936.5 847.8 L942 853.5 L947.5 847.8 Z" fill="#777"/></svg>
<div style="position:absolute;left:227px;top:860px;width:704px;height:21px;background:#f0f0f0"></div>
<div style="position:absolute;left:931px;top:860px;width:22px;height:21px;background:#f0f0f0"></div>
<svg style="position:absolute;left:227px;top:860px;" width="20" height="21" viewBox="227 860 20 21" fill="none"><path d="M241 864.5 L235 870.5 L241 876.5 Z" fill="#666"/></svg>
<div style="position:absolute;left:248px;top:865px;width:507px;height:11px;background:#cbcbcb;border-radius:5.5px"></div>
<svg style="position:absolute;left:910px;top:860px;" width="20" height="21" viewBox="910 860 20 21" fill="none"><path d="M917 864.5 L923 870.5 L917 876.5 Z" fill="#666"/></svg>
<div class="t" style="left:974.80px;top:259px;font-size:13.5px;height:13.5px;color:#555;font-weight:700;transform:scaleX(1.0066);transform-origin:0 0;">Taux selon le type de client</div>
<div style="position:absolute;left:1154px;top:265px;width:133px;height:1px;background:#777"></div>
<div style="position:absolute;left:975px;top:281px;width:314px;height:602px;background:#fcfcfc;border:1px solid #2a86cf;box-sizing:border-box"></div>
<div style="position:absolute;left:977px;top:283px;width:310px;height:24px;background:#f7f7f7;border-top:1px solid #d2d2d2;border-bottom:1px solid #d2d2d2;box-sizing:border-box"></div>
<div style="position:absolute;left:977px;top:283px;width:1px;height:24px;background:#d2d2d2"></div>
<div style="position:absolute;left:1148px;top:283px;width:2px;height:24px;background:#d4d4d4"></div>
<div style="position:absolute;left:1252px;top:283px;width:2px;height:24px;background:#d4d4d4"></div>
<div style="position:absolute;left:1286px;top:283px;width:1px;height:24px;background:#d2d2d2"></div>
<div class="t" style="left:983.40px;top:288px;font-size:14px;height:14px;color:#333;font-weight:400;transform:scaleX(0.9713);transform-origin:0 0;">Type client</div>
<svg style="position:absolute;left:1126px;top:288px;" width="14" height="12" viewBox="1126 288 14 12" fill="none"><path d="M1130.5 298.5 L1136 292.5 L1141.5 298.5 Z" fill="#777"/></svg>
<div class="t" style="left:1173.00px;top:288px;font-size:14px;height:14px;color:#333;font-weight:400;transform:scaleX(0.9472);transform-origin:0 0;">Taux horaire</div>
<div style="position:absolute;left:1149px;top:307px;width:1px;height:574px;background:#ececec"></div>
<div style="position:absolute;left:1252px;top:307px;width:1px;height:574px;background:#ececec"></div>
<div style="position:absolute;left:982px;top:338px;width:167px;height:30px;background:#e4e4e4"></div>
<div style="position:absolute;left:1150px;top:307px;width:136px;height:30px;background:#cce4f7"></div>
<div style="position:absolute;left:1253px;top:338px;width:33px;height:30px;background:#ebebeb"></div>
<div style="position:absolute;left:1150px;top:338px;width:102px;height:30px;background:#cce4f7"></div>
<div style="position:absolute;left:977px;top:337px;width:310px;height:1px;background:#ececec"></div>
<div style="position:absolute;left:977px;top:368px;width:310px;height:1px;background:#ececec"></div>
<div style="position:absolute;left:977px;top:399px;width:310px;height:1px;background:#ececec"></div>
<div style="position:absolute;left:977px;top:430px;width:310px;height:1px;background:#ececec"></div>
<div style="position:absolute;left:977px;top:461px;width:310px;height:1px;background:#ececec"></div>
<div style="position:absolute;left:977px;top:492px;width:310px;height:1px;background:#ececec"></div>
<div style="position:absolute;left:977px;top:523px;width:310px;height:1px;background:#ececec"></div>
<div style="position:absolute;left:977px;top:554px;width:310px;height:1px;background:#ececec"></div>
<div style="position:absolute;left:977px;top:585px;width:310px;height:1px;background:#ececec"></div>
<div style="position:absolute;left:977px;top:616px;width:310px;height:1px;background:#ececec"></div>
<div style="position:absolute;left:977px;top:647px;width:310px;height:1px;background:#ececec"></div>
<div style="position:absolute;left:977px;top:678px;width:310px;height:1px;background:#ececec"></div>
<div style="position:absolute;left:977px;top:709px;width:310px;height:1px;background:#ececec"></div>
<div style="position:absolute;left:977px;top:740px;width:310px;height:1px;background:#ececec"></div>
<div style="position:absolute;left:977px;top:771px;width:310px;height:1px;background:#ececec"></div>
<div style="position:absolute;left:977px;top:802px;width:310px;height:1px;background:#ececec"></div>
<div style="position:absolute;left:977px;top:833px;width:310px;height:1px;background:#ececec"></div>
<div style="position:absolute;left:977px;top:864px;width:310px;height:1px;background:#ececec"></div>
<div class="t" style="left:984.20px;top:316px;font-size:13px;height:13px;color:#3a3a3a;font-weight:400;transform:scaleX(0.9569);transform-origin:0 0;">Assurances</div>
<div class="t" style="left:984.20px;top:347px;font-size:13px;height:13px;color:#3a3a3a;font-weight:400;transform:scaleX(0.9585);transform-origin:0 0;">Bureau avocats</div>
<div class="t" style="left:984.20px;top:378px;font-size:13px;height:13px;color:#3a3a3a;font-weight:400;transform:scaleX(0.9742);transform-origin:0 0;">Bureau comptables</div>
<div class="t" style="left:984.20px;top:409px;font-size:13px;height:13px;color:#3a3a3a;font-weight:400;transform:scaleX(0.9759);transform-origin:0 0;">Centre Services Commun...</div>
<div class="t" style="left:984.20px;top:440px;font-size:13px;height:13px;color:#3a3a3a;font-weight:400;transform:scaleX(0.9776);transform-origin:0 0;">Commercial</div>
<div class="t" style="left:984.20px;top:471px;font-size:13px;height:13px;color:#3a3a3a;font-weight:400;transform:scaleX(0.9613);transform-origin:0 0;">Hôpitaux</div>
<div class="t" style="left:984.20px;top:502px;font-size:13px;height:13px;color:#3a3a3a;font-weight:400;transform:scaleX(1.0017);transform-origin:0 0;">Informatique</div>
<div class="t" style="right:78px;top:316px;font-size:13px;height:13px;color:#111;font-weight:400;">16.00 $/Hre</div>
<div class="t" style="right:78px;top:347px;font-size:13px;height:13px;color:#111;font-weight:400;">22.50</div>
<div style="position:absolute;left:1258px;top:338px;width:27px;height:30px;background:#fff;border:1px solid #d6d6d6;border-radius:6px;box-sizing:border-box"></div>
<svg style="position:absolute;left:1258px;top:338px;" width="27" height="30" viewBox="1258 338 27 30" fill="none"><path d="M1259.60 363.40 L1264.91 361.66 L1279.36 347.38 A2.5 2.5 0 0 0 1275.84 343.82 L1261.40 358.11 Z M1264.91 361.66 L1261.40 358.11 M1278.65 348.08 L1275.13 344.53" stroke="#444" stroke-width="1" stroke-linejoin="round"/></svg>
<div style="position:absolute;left:1149px;top:275px;width:109px;height:267px;border:3.3px solid #1b4467;box-sizing:border-box"></div>
<svg style="position:absolute;left:0;top:0" width="1324" height="900" viewBox="0 0 1324 900"><defs><filter id="sh" x="-5%" y="-200%" width="110%" height="500%"><feGaussianBlur stdDeviation="2.2"/></filter></defs><g filter="url(#sh)" opacity="0.45"><path d="M495 321.5 L1141 336" stroke="#000" stroke-width="3.6" stroke-linecap="round"/><path d="M1140.5 332 L1149 336.3 L1140.5 340.7 Z" fill="#000"/></g><path d="M495 317.4 L1141 332" stroke="#1b4467" stroke-width="3.4" stroke-linecap="round"/><path d="M1140.7 328 L1149 332.3 L1140.7 336.7 Z" fill="#1b4467"/></svg>
<div style="position:absolute;left:0px;top:0px;width:1px;height:900px;background:#1f62d0"></div>
<div style="position:absolute;left:1323px;top:0px;width:1px;height:900px;background:#1f62d0"></div>
<div style="position:absolute;left:0px;top:899px;width:1324px;height:1px;background:#1f62d0"></div>
<!--BODY-->
</body></html>
